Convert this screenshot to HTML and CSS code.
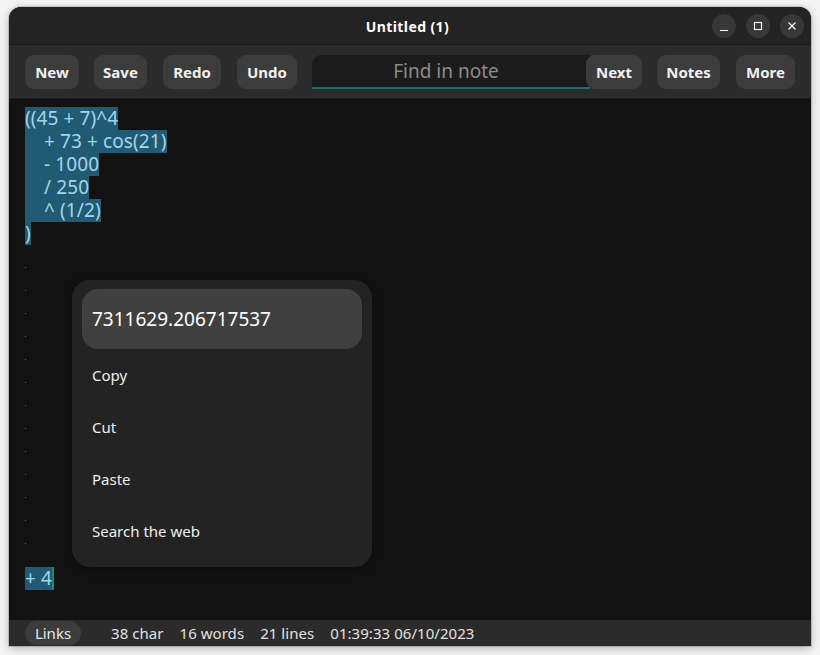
FILE: index.html
```html
<!DOCTYPE html>
<html>
<head>
<meta charset="utf-8">
<link rel="stylesheet" href="styles.css">
</head>
<body>
<div class="window">
  <header class="titlebar">
    <div class="tb-spacer"></div>
    <div class="title">Untitled (1)</div>
    <div class="controls">
      <span class="ctl"><svg width="24" height="24" viewBox="0 0 24 24"><path d="M8 16.5h8" stroke="#f2f2f2" stroke-width="1.2" fill="none"/></svg></span>
      <span class="ctl"><svg width="24" height="24" viewBox="0 0 24 24"><rect x="8.5" y="8.5" width="7" height="7" stroke="#f2f2f2" stroke-width="1.2" fill="none"/></svg></span>
      <span class="ctl"><svg width="24" height="24" viewBox="0 0 24 24"><path d="M8.5 8.5l7 7M15.5 8.5l-7 7" stroke="#f2f2f2" stroke-width="1.3" fill="none"/></svg></span>
    </div>
  </header>
  <div class="toolbar">
    <button class="btn w-new">New</button>
    <button class="btn w-save">Save</button>
    <button class="btn w-redo">Redo</button>
    <button class="btn w-undo">Undo</button>
    <div class="search"><span class="placeholder">Find in note</span></div>
    <button class="btn w-next">Next</button>
    <button class="btn w-notes">Notes</button>
    <button class="btn w-more">More</button>
  </div>
  <main class="editor">
    <div class="line"><span class="sel">((45 + 7)^4</span></div>
    <div class="line"><span class="sel"><span class="ind"></span>+ 73 + cos(21)</span></div>
    <div class="line"><span class="sel"><span class="ind"></span>- 1000</span></div>
    <div class="line"><span class="sel"><span class="ind"></span>/ 250</span></div>
    <div class="line"><span class="sel"><span class="ind"></span>^ (1/2)</span></div>
    <div class="line"><span class="sel">)</span></div>
    <div class="line empty"></div>
    <div class="line empty"></div>
    <div class="line empty"></div>
    <div class="line empty"></div>
    <div class="line empty"></div>
    <div class="line empty"></div>
    <div class="line empty"></div>
    <div class="line empty"></div>
    <div class="line empty"></div>
    <div class="line empty"></div>
    <div class="line empty"></div>
    <div class="line empty"></div>
    <div class="line empty"></div>
    <div class="line"></div>
    <div class="line"><span class="sel">+ 4</span><span class="cursor"></span></div>
  </main>
  <footer class="statusbar">
    <span class="links">Links</span>
    <span class="stat first">38 char</span>
    <span class="stat">16 words</span>
    <span class="stat">21 lines</span>
    <span class="stat">01:39:33 06/10/2023</span>
  </footer>
  <div class="menu">
    <div class="result">7311629.206717537</div>
    <div class="item">Copy</div>
    <div class="item">Cut</div>
    <div class="item">Paste</div>
    <div class="item">Search the web</div>
  </div>
</div>
</body>
</html>
```
FILE: styles.css
```css
* { box-sizing: border-box; }
html, body { margin: 0; padding: 0; }
body {
  background: #f4f4f4;
  font-family: "Noto Sans", "Open Sans", sans-serif;
  width: 820px;
  height: 655px;
  overflow: hidden;
}
.window {
  position: relative;
  margin: 7px 0 0 9px;
  width: 802px;
  height: 639px;
  border-radius: 12px 12px 0 0;
  overflow: hidden;
  display: flex;
  flex-direction: column;
  background: #121212;
  box-shadow: 0 2px 10px rgba(0,0,0,0.28), 0 0 0 1px rgba(0,0,0,0.15);
}
.titlebar {
  height: 38px;
  flex: none;
  background: #232323;
  border-bottom: 1px solid #1b1b1b;
  display: grid;
  grid-template-columns: 1fr auto 1fr;
  align-items: center;
  padding: 0 7px 0 0;
}
.title {
  color: #ffffff;
  font-weight: 700;
  font-size: 14px;
  letter-spacing: 0.4px;
  padding-top: 1px;
  padding-left: 2px;
}
.controls {
  justify-self: end;
  display: flex;
  gap: 10px;
}
.ctl {
  width: 24px;
  height: 24px;
  border-radius: 50%;
  background: #383838;
  display: block;
}
.ctl svg { display: block; }
.toolbar {
  height: 54px;
  flex: none;
  background: #2b2b2b;
  border-bottom: 1px solid #1e1e1e;
  display: flex;
  align-items: flex-start;
  padding: 10px 16px 0 16px;
}
.btn {
  height: 34px;
  border: none;
  border-radius: 9px;
  background: #3c3c3c;
  color: #f0f0f0;
  font-family: inherit;
  font-weight: 700;
  font-size: 15px;
  padding: 0;
  margin: 0;
  flex: none;
}
.w-new { width: 54px; }
.w-save { width: 53px; margin-left: 15px; }
.w-redo { width: 58px; margin-left: 16px; }
.w-undo { width: 60px; margin-left: 16px; }
.w-next { width: 56px; margin-left: -4px; position: relative; }
.w-notes { width: 63px; margin-left: 15px; }
.w-more { width: 59px; margin-left: 16px; }
.search {
  position: relative;
  width: 278px;
  height: 34px;
  margin-left: 15px;
  background: #1b1b1b;
  border-radius: 9px 0 0 0;
  display: flex;
  align-items: center;
  justify-content: center;
  padding-right: 10px;
  border-bottom: 2px solid #1f6b69;
}
.placeholder {
  color: #8c8c8c;
  font-size: 19px;
  padding-bottom: 1px;
}
.editor {
  flex: 1;
  padding: 8px 0 0 16px;
  font-size: 19px;
  color: #a3d5ea;
}
.line {
  height: 23px;
  line-height: 23px;
  white-space: pre;
  display: flex;
}
.sel {
  background: #215b73;
  height: 23px;
  display: inline-block;
  letter-spacing: 0.1px;
}
.ind {
  display: inline-block;
  width: 19px;
}
.empty::before {
  content: "";
  display: block;
  width: 1px;
  height: 1px;
  margin-top: 22px;
  background: #2f6d88;
}
.cursor {
  display: inline-block;
  width: 2px;
  height: 23px;
  background: #128a80;
}
.statusbar {
  height: 26px;
  flex: none;
  background: #2b2b2b;
  display: flex;
  align-items: center;
  padding-left: 16px;
  color: #e2e2e2;
  font-size: 15px;
}
.links {
  width: 56px;
  height: 24px;
  border-radius: 12px;
  background: #3c3c3c;
  display: flex;
  align-items: center;
  justify-content: center;
  color: #e8e8e8;
}
.stat { margin-left: 16px; letter-spacing: 0.05px; }
.stat.first { margin-left: 30px; }
.menu {
  position: absolute;
  left: 63px;
  top: 273px;
  width: 300px;
  height: 287px;
  background: #232323;
  border-radius: 18px;
  padding: 9px 10px;
  box-shadow: 0 2px 8px rgba(0,0,0,0.35);
}
.result {
  height: 60px;
  background: #404040;
  border-radius: 16px;
  display: flex;
  align-items: center;
  padding-left: 10px;
  color: #ffffff;
  font-size: 19px;
}
.item {
  height: 52px;
  display: flex;
  align-items: center;
  padding-left: 10px;
  color: #eeeeee;
  font-size: 15px;
}
.menu .item:first-of-type { margin-top: 1px; }
```
